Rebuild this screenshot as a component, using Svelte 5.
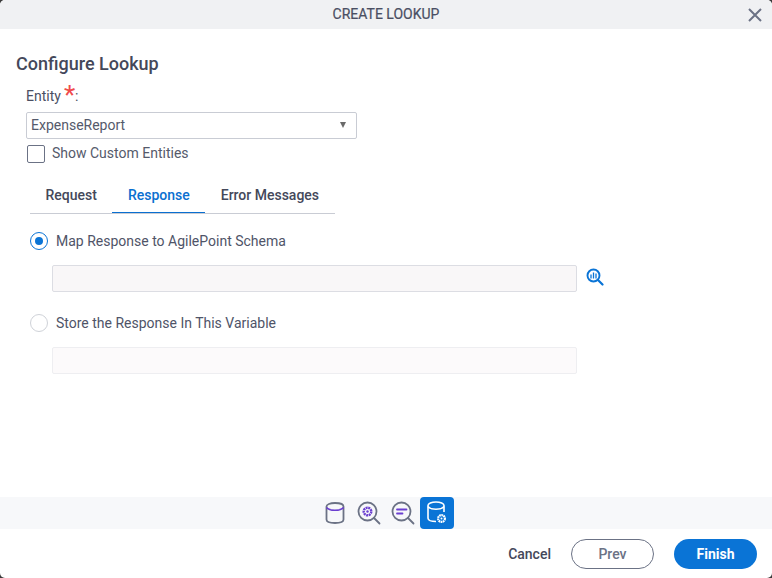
<script>
  const tabs = [
    { label: 'Request', active: false },
    { label: 'Response', active: true },
    { label: 'Error Messages', active: false }
  ];
</script>

<div class="dialog">
  <header class="titlebar">
    <span class="title">CREATE LOOKUP</span>
    <svg class="close" width="14" height="14" viewBox="0 0 14 14"><path d="M1 1 L13 13 M13 1 L1 13" stroke="#6b7285" stroke-width="2" fill="none"/></svg>
  </header>

  <main class="body">
    <h1>Configure Lookup</h1>
    <div class="form">
      <div class="label"><span>Entity</span><span class="star">*</span><span>:</span></div>
      <div class="select">
        <span>ExpenseReport</span>
        <span class="caret"></span>
      </div>
      <label class="check"><span class="box"></span><span>Show Custom Entities</span></label>
    </div>

    <nav class="tabs">
      {#each tabs as tab}
        <div class="tab" class:active={tab.active}>{tab.label}</div>
      {/each}
    </nav>

    <section class="options">
      <div class="radio-row">
        <span class="radio on"><span class="dot"></span></span>
        <span>Map Response to AgilePoint Schema</span>
      </div>
      <div class="input-row">
        <div class="input"></div>
        <svg class="schema" width="18" height="18" viewBox="0 0 18 18" fill="none">
          <circle cx="7.5" cy="7.5" r="6" stroke="#0a74d6" stroke-width="1.900"/>
          <path d="M12 12 L16.500 16.500" stroke="#0a74d6" stroke-width="2.200" stroke-linecap="round"/>
          <path d="M5 6.500V10.500M7.500 4.500V10.500M10 5.500V10.500" stroke="#0a74d6" stroke-width="1.300"/>
        </svg>
      </div>
      <div class="radio-row second">
        <span class="radio"></span>
        <span>Store the Response In This Variable</span>
      </div>
      <div class="input-row">
        <div class="input faint"></div>
      </div>
    </section>
  </main>

  <div class="stepper">
    <button class="step" aria-label="Entity">
      <svg width="22" height="24" viewBox="0 0 22 24" fill="none">
        <path d="M2.5 5.5C2.5 3.5 6 2 11 2s8.500 1.500 8.500 3.500V18.500C19.500 20.500 16 22 11 22s-8.500-1.500-8.500-3.500Z" stroke="#6b7285" stroke-width="1.8"/>
        <path d="M2.500 6.500C4 8.500 7 9.300 11 9.300s7-.8 8.500-2.800" stroke="#6b3fd0" stroke-width="1.600"/>
      </svg>
    </button>
    <button class="step" aria-label="Request">
      <svg width="24" height="24" viewBox="0 0 24 24" fill="none">
        <circle cx="10.500" cy="10.500" r="9" stroke="#6b7285" stroke-width="1.800"/>
        <path d="M17 17 L22.500 22.500" stroke="#6b7285" stroke-width="1.800" stroke-linecap="round"/>
        <circle cx="10.500" cy="10.500" r="3.800" stroke="#6b3fd0" stroke-width="2.400" stroke-dasharray="2 .6"/>
        <circle cx="10.500" cy="10.500" r="1.200" fill="#6b3fd0"/>
      </svg>
    </button>
    <button class="step" aria-label="Messages">
      <svg width="24" height="24" viewBox="0 0 24 24" fill="none">
        <circle cx="10.500" cy="10.500" r="9" stroke="#6b7285" stroke-width="1.800"/>
        <path d="M17 17 L22.500 22.500" stroke="#6b7285" stroke-width="1.800" stroke-linecap="round"/>
        <path d="M6 8.500H15.500M6 12.500H11.500" stroke="#6b3fd0" stroke-width="1.800" stroke-linecap="round"/>
      </svg>
    </button>
    <button class="step current" aria-label="Response">
      <svg width="22" height="26" viewBox="0 0 22 26" fill="none">
        <path d="M10 21.500C5 21.500 2 20 2 18.200V5.500C2 3.500 5.500 2 10 2s8 1.500 8 3.500V12" stroke="#fff" stroke-width="1.600"/>
        <path d="M2 6.500C3.500 8.500 6.500 9.300 10 9.300s6.500-.8 8-2.800" stroke="#fff" stroke-width="1.500"/>
        <circle cx="15.500" cy="18.500" r="5.800" fill="#0a74d6"/>
        <circle cx="15.500" cy="18.500" r="3.400" stroke="#fff" stroke-width="2.200" stroke-dasharray="1.700 .5"/>
        <circle cx="15.500" cy="18.500" r="1" fill="#fff"/>
      </svg>
    </button>
  </div>

  <footer class="actions">
    <button class="cancel">Cancel</button>
    <button class="prev">Prev</button>
    <button class="finish">Finish</button>
  </footer>
</div>

<style>
  :global(body) {
    margin: 0;
    background: #3a3a3a;
  }
  .dialog {
    width: 772px;
    height: 578px;
    display: flex;
    flex-direction: column;
    background: #fff;
    border-radius: 5px;
    overflow: hidden;
    font-family: Roboto, sans-serif;
    color: #4a4f63;
    font-size: 14px;
  }
  .titlebar {
    height: 29px;
    flex: none;
    background: #f0f1f3;
    display: flex;
    align-items: center;
    justify-content: center;
    position: relative;
  }
  .title {
    font-size: 14px;
    color: #4a4f63;
    line-height: 29px;
    font-weight: 400;
    -webkit-text-stroke: 0.2px #4a4f63;
  }
  .close {
    position: absolute;
    right: 10px;
    top: 8px;
  }
  .body {
    flex: 1;
    padding: 24px 0 0 16px;
  }
  h1 {
    margin: 0;
    font-size: 18px;
    font-weight: 500;
    line-height: 22px;
    color: #44485a;
  }
  .form {
    margin-left: 10px;
    width: 331px;
  }
  .label {
    margin-top: 7px;
    height: 24px;
    display: flex;
    align-items: flex-end;
    line-height: 20px;
  }
  .star {
    color: #f04b4b;
    font-size: 26px;
    line-height: 26px;
    height: 24px;
    margin-left: 3px;
    align-self: flex-start;
  }
  .select {
    margin-top: 6px;
    height: 24px;
    padding: 0 10px 1px 4px;
    border: 1px solid #c9ccd4;
    border-radius: 2px;
    display: flex;
    align-items: center;
    justify-content: space-between;
    color: #555a6b;
  }
  .caret {
    width: 0;
    height: 0;
    border-left: 3.5px solid transparent;
    border-right: 3.5px solid transparent;
    border-top: 6px solid #6a6a6a;
  }
  .check {
    display: flex;
    align-items: center;
    gap: 7px;
    margin-top: 4px;
    height: 19px;
    padding-left: 1px;
    color: #555a6b;
  }
  .box {
    width: 16px;
    height: 16px;
    margin-top: 2px;
    border: 1px solid #6b7285;
    border-radius: 2px;
    box-sizing: content-box;
  }
  .tabs {
    display: flex;
    margin: 14px 0 0 14px;
    width: 305px;
    border-bottom: 1px solid #c9ccd4;
    height: 37px;
  }
  .tab {
    flex: none;
    white-space: nowrap;
    padding: 0 15.5px;
    line-height: 38px;
    font-weight: 500;
    color: #44485a;
    height: 37px;
    box-sizing: border-box;
  }
  .tab.active {
    color: #0a6fd0;
    border-bottom: 1px solid #0a6fd0;
  }
  .options {
    margin: 15px 0 0 14px;
  }
  .radio-row {
    display: flex;
    align-items: center;
    gap: 8px;
    height: 24px;
    color: #4f5468;
  }
  .radio-row.second {
    margin-top: 19px;
  }
  .radio {
    width: 16px;
    height: 16px;
    border: 1px solid #cfd2d8;
    border-radius: 50%;
    display: flex;
    align-items: center;
    justify-content: center;
    flex: none;
  }
  .radio.on {
    border-color: #0a74d6;
  }
  .dot {
    width: 8px;
    height: 8px;
    border-radius: 50%;
    background: #0a74d6;
  }
  .input-row {
    display: flex;
    align-items: center;
    gap: 9px;
    margin: 12px 0 0 22px;
  }
  .input {
    width: 523px;
    height: 25px;
    background: #f9f7f8;
    border: 1px solid #dcdde3;
    border-radius: 2px;
  }
  .input.faint {
    background: #fcfafb;
    border-color: #eeeef1;
  }
  .schema {
    margin-top: -3px;
  }
  .stepper {
    height: 32px;
    flex: none;
    background: #f7f8fa;
    display: flex;
    justify-content: center;
    align-items: center;
  }
  .step {
    width: 34px;
    height: 32px;
    padding: 0;
    border: 0;
    background: none;
    display: flex;
    align-items: center;
    justify-content: center;
    border-radius: 4px;
  }
  .step.current {
    background: #0a74d6;
  }
  .actions {
    height: 48px;
    flex: none;
    display: flex;
    align-items: center;
    justify-content: flex-end;
    padding: 1px 15px 0 0;
  }
  button {
    font-family: Roboto, sans-serif;
    font-size: 14px;
  }
  .cancel {
    border: 0;
    background: none;
    font-weight: 500;
    color: #44485a;
    padding: 0;
    margin-right: 20px;
  }
  .prev {
    width: 83px;
    height: 30px;
    border: 1px solid #6b7285;
    border-radius: 15px;
    background: #fff;
    color: #6b7285;
    font-weight: 500;
    margin-right: 20px;
  }
  .finish {
    width: 83px;
    height: 30px;
    border: 0;
    border-radius: 15px;
    background: #0a74d6;
    color: #fff;
    font-weight: 700;
  }
</style>
